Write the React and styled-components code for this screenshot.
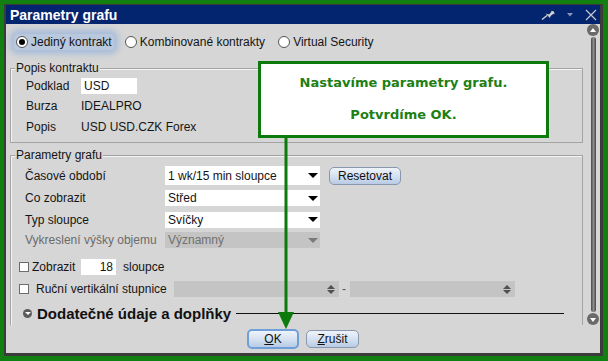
import React from "react";
import styled, { createGlobalStyle } from "styled-components";

const GlobalStyle = createGlobalStyle`
  html, body { margin: 0; padding: 0; background: #118011; }
  body {
    font-family: "Liberation Sans", Arial, sans-serif;
    font-size: 12px;
    color: #151515;
  }
  * { box-sizing: border-box; }
`;

const Frame = styled.div`
  width: 608px;
  height: 361px;
  border: solid #118011;
  border-width: 4px 5px 5px 4px;
  display: flex;
`;

const Window = styled.div`
  flex: 1;
  min-width: 0;
  display: flex;
  flex-direction: column;
  border: solid #3b3b3b;
  border-width: 1px 3px 3px 2px;
  background: #d6d6d6;
`;

const TitleBar = styled.div`
  height: 19px;
  flex: none;
  display: flex;
  align-items: center;
  padding: 0 3px 0 4px;
  background: #03246f;
  color: #fff;
  font-weight: bold;
  font-size: 14px;
`;

const TitleTools = styled.div`
  margin-left: auto;
  display: flex;
  align-items: center;
  gap: 12px;
`;

const Body = styled.div`
  position: relative;
  flex: 1;
  min-height: 0;
  display: flex;
  flex-direction: column;
`;

const Viewport = styled.div`
  height: 301px;
  flex: none;
  display: flex;
  overflow: hidden;
`;

const Content = styled.div`
  flex: 1;
  min-width: 0;
  padding: 0 3px 0 4px;
`;

const ScrollBar = styled.div`
  width: 14px;
  display: flex;
  flex-direction: column;
  align-items: center;
`;

const ScrollKnob = styled.div`
  width: 12px;
  height: 12px;
  border-radius: 50%;
  background: #6a6a6a;
  display: flex;
  align-items: center;
  justify-content: center;
  &::after {
    content: "";
    border-left: 3px solid transparent;
    border-right: 3px solid transparent;
    ${({ $dir }) =>
      $dir === "up"
        ? "border-bottom: 4px solid #fff; margin-top: -1px;"
        : "border-top: 4px solid #fff; margin-top: 1px;"}
  }
`;

const ScrollTrack = styled.div`
  flex: 1;
  width: 5px;
  margin: 1px 0;
  border-radius: 3px;
  background: linear-gradient(90deg, #474747, #8c8c8c 50%, #474747);
`;

const RadioRow = styled.div`
  height: 37px;
  padding: 10px 0 0 4px;
  display: flex;
  align-items: flex-start;
  gap: 9px;
`;

const RadioItem = styled.label`
  display: inline-flex;
  align-items: center;
  gap: 3px;
  height: 16px;
  padding: 0 2px;
  border-radius: 4px;
  ${({ $focus }) =>
    $focus &&
    `background: rgba(150, 185, 230, 0.45);
     box-shadow: 0 0 6px 4px rgba(125, 165, 220, 0.55);`}
`;

const RadioDot = styled.span`
  width: 12px;
  height: 12px;
  border-radius: 50%;
  border: 1px solid #555;
  background: #fff;
  display: flex;
  align-items: center;
  justify-content: center;
  &::after {
    content: "";
    width: 6px;
    height: 6px;
    border-radius: 50%;
    background: ${({ $on }) => ($on ? "#000" : "transparent")};
  }
`;

const Group = styled.div`
  border: 1px solid #a3a3a3;
  box-shadow: inset 1px 1px 0 #f4f4f4;
  margin-top: ${({ $top }) => $top}px;
  padding-bottom: ${({ $bottom }) => $bottom || 0}px;
`;

const GroupTitle = styled.div`
  display: table;
  margin: -8px 0 0 4px;
  padding: 0 1px;
  line-height: 14px;
  background: #d6d6d6;
`;

const Row = styled.div`
  display: flex;
  align-items: center;
  height: ${({ $h }) => $h}px;
  padding-left: ${({ $indent }) => $indent}px;
  margin-top: ${({ $mt }) => $mt || 0}px;
`;

const Label = styled.span`
  width: ${({ $w }) => $w}px;
  flex: none;
  white-space: nowrap;
  margin-left: ${({ $ml }) => $ml || 0}px;
  color: ${({ $disabled }) => ($disabled ? "#6b6b6b" : "inherit")};
`;

const TextField = styled.span`
  display: inline-flex;
  align-items: center;
  justify-content: ${({ $right }) => ($right ? "flex-end" : "flex-start")};
  width: ${({ $w }) => $w}px;
  height: 16px;
  padding: 0 3px;
  background: #fff;
`;

const Select = styled.div`
  width: 155px;
  height: ${({ $h }) => $h || 16}px;
  display: flex;
  align-items: center;
  padding: 0 2px 0 3px;
  background: ${({ $disabled }) => ($disabled ? "#c4c4c4" : "#fff")};
  color: ${({ $disabled }) => ($disabled ? "#707070" : "inherit")};
  &::after {
    content: "";
    margin-left: auto;
    border-left: 5px solid transparent;
    border-right: 5px solid transparent;
    border-top: 5px solid ${({ $disabled }) => ($disabled ? "#7a7a7a" : "#000")};
  }
`;

const Button = styled.button`
  font: inherit;
  color: #111;
  width: ${({ $w }) => $w}px;
  height: ${({ $h }) => $h || 18}px;
  padding: 0;
  margin-left: ${({ $ml }) => $ml || 0}px;
  border-radius: 5px;
  border: ${({ $focus }) => ($focus ? "2px solid #6f9fd8" : "1px solid #8a98ad")};
  background: linear-gradient(180deg, #eef3fa 0%, #d6e2f1 50%, #b8cbe4 100%);
  line-height: 1;
  & u { text-decoration: underline; }
`;

const CheckBox = styled.span`
  width: 10px;
  height: 10px;
  flex: none;
  background: #fff;
  border: 1px solid #6c6c6c;
  margin-right: ${({ $mr }) => $mr}px;
`;

const SpinField = styled.div`
  width: 165px;
  height: 16px;
  background: #c4c4c4;
  display: flex;
  align-items: center;
  justify-content: flex-end;
  padding-right: 4px;
`;

const Spinner = styled.span`
  display: flex;
  flex-direction: column;
  gap: 1px;
  &::before,
  &::after {
    content: "";
    border-left: 4px solid transparent;
    border-right: 4px solid transparent;
  }
  &::before { border-bottom: 4px solid #505050; }
  &::after { border-top: 4px solid #505050; }
`;

const Dash = styled.span`
  margin: 0 4px 0 3px;
  color: #555;
`;

const SectionIcon = styled.span`
  width: 9px;
  height: 9px;
  border-radius: 50%;
  background: #5c5c5c;
  display: flex;
  align-items: center;
  justify-content: center;
  margin-right: 5px;
  &::after {
    content: "";
    border-left: 3px solid transparent;
    border-right: 3px solid transparent;
    border-top: 3px solid #fff;
    margin-top: 1px;
  }
`;

const SectionTitle = styled.span`
  font-weight: bold;
  font-size: 15px;
  color: #111;
  white-space: nowrap;
`;

const SectionLine = styled.span`
  flex: 1;
  height: 1px;
  background: #111;
  margin: 1px 18px 0 5px;
`;

const Footer = styled.div`
  flex: 1;
  display: flex;
  align-items: center;
  justify-content: center;
  gap: 7px;
`;

const Callout = styled.div`
  position: absolute;
  left: 252px;
  top: 37px;
  width: 291px;
  height: 77px;
  border: 3px solid #0c7a0c;
  background: #fff;
  display: flex;
  flex-direction: column;
  align-items: center;
  gap: 16px;
  padding-top: 11px;
  font-family: "DejaVu Sans", Verdana, sans-serif;
  font-weight: bold;
  font-size: 13px;
  line-height: 16px;
  color: #1d7f14;
`;

const Pointer = styled.svg`
  position: absolute;
  left: 270px;
  top: 114px;
`;

function Radio({ label, on, focus }) {
  return (
    <RadioItem $focus={focus}>
      <RadioDot $on={on} />
      {label}
    </RadioItem>
  );
}

function PinIcon() {
  return (
    <svg width="14" height="10" viewBox="0 0 14 10">
      <path d="M1 9.5 L6 5.5" stroke="#d2d2d2" strokeWidth="1.4" />
      <path d="M4.5 3.5 L9 8 L9.5 6 L12.5 3.8 L13.5 4.5 L13 1.5 L10 0.8 L10.5 1.8 L8 4.4 Z" fill="#d2d2d2" />
    </svg>
  );
}

export default function App() {
  return (
    <>
      <GlobalStyle />
      <Frame>
        <Window>
          <TitleBar>
            Parametry grafu
            <TitleTools>
              <PinIcon />
              <svg width="6" height="4" viewBox="0 0 6 4">
                <path d="M0 0 H6 L3 3.5 Z" fill="#8c97b8" />
              </svg>
              <svg width="12" height="12" viewBox="0 0 12 12">
                <path d="M1 1 L11 11 M11 1 L1 11" stroke="#c9c9c9" strokeWidth="1.2" />
              </svg>
            </TitleTools>
          </TitleBar>

          <Body>
            <Viewport>
              <Content>
                <RadioRow>
                  <Radio label="Jediný kontrakt" on focus />
                  <Radio label="Kombinované kontrakty" />
                  <Radio label="Virtual Security" />
                </RadioRow>

                <Group $top={7} $bottom={5}>
                  <GroupTitle>Popis kontraktu</GroupTitle>
                  <Row $h={20} $indent={15} $mt={1}>
                    <Label $w={55}>Podklad</Label>
                    <TextField $w={56}>USD</TextField>
                  </Row>
                  <Row $h={20} $indent={15}>
                    <Label $w={55}>Burza</Label>
                    IDEALPRO
                  </Row>
                  <Row $h={21} $indent={15}>
                    <Label $w={55}>Popis</Label>
                    USD USD.CZK Forex
                  </Row>
                </Group>

                <Group $top={12} $bottom={10}>
                  <GroupTitle>Parametry grafu</GroupTitle>
                  <Row $h={23} $indent={14} $mt={2}>
                    <Label $w={140}>Časové období</Label>
                    <Select $h={19}>1 wk/15 min sloupce</Select>
                    <Button $w={72} $ml={9}>Resetovat</Button>
                  </Row>
                  <Row $h={22} $indent={14}>
                    <Label $w={140}>Co zobrazit</Label>
                    <Select>Střed</Select>
                  </Row>
                  <Row $h={21} $indent={14}>
                    <Label $w={140}>Typ sloupce</Label>
                    <Select>Svíčky</Select>
                  </Row>
                  <Row $h={20} $indent={14}>
                    <Label $w={140} $disabled>Vykreslení výšky objemu</Label>
                    <Select $disabled>Významný</Select>
                  </Row>
                  <Row $h={20} $indent={8} $mt={7}>
                    <CheckBox $mr={3} />
                    <Label $w={49}>Zobrazit</Label>
                    <TextField $w={35} $right>18</TextField>
                    <Label $w={60} $ml={7}>sloupce</Label>
                  </Row>
                  <Row $h={20} $indent={8} $mt={2}>
                    <CheckBox $mr={7} />
                    <Label $w={138}>Ruční vertikální stupnice</Label>
                    <SpinField><Spinner /></SpinField>
                    <Dash>-</Dash>
                    <SpinField><Spinner /></SpinField>
                  </Row>
                  <Row $h={20} $indent={12} $mt={4}>
                    <SectionIcon />
                    <SectionTitle>Dodatečné údaje a doplňky</SectionTitle>
                    <SectionLine />
                  </Row>
                </Group>
              </Content>
              <ScrollBar>
                <ScrollKnob $dir="up" />
                <ScrollTrack />
                <ScrollKnob $dir="down" />
              </ScrollBar>
            </Viewport>

            <Footer>
              <Button $w={52} $h={20} $focus>
                <u>O</u>K
              </Button>
              <Button $w={53}>
                <u>Z</u>rušit
              </Button>
            </Footer>

            <Callout>
              <span>Nastavíme parametry grafu.</span>
              <span>Potvrdíme OK.</span>
            </Callout>
            <Pointer width="20" height="192" viewBox="0 0 20 192">
              <line x1="10" y1="0" x2="10" y2="177" stroke="#0c7a0c" strokeWidth="3" />
              <path d="M2 174 H18 L10 191 Z" fill="#0c7a0c" />
            </Pointer>
          </Body>
        </Window>
      </Frame>
    </>
  );
}
